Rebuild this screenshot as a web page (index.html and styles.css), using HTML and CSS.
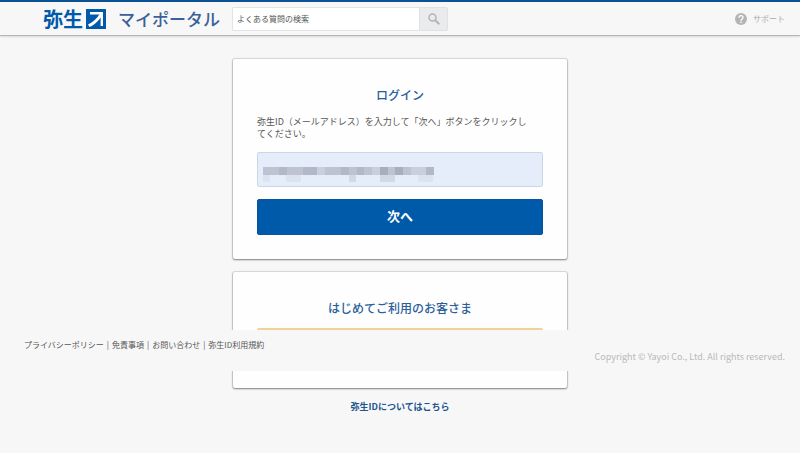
FILE: index.html
```html
<!DOCTYPE html>
<html lang="ja">
<head>
    <meta charset="UTF-8">
    <meta name="viewport" content="width=device-width, initial-scale=1.0">
    <title>弥生 マイポータル</title>
    <link rel="stylesheet" href="styles.css">
</head>
<body>
    <header class="header">
        <a class="brand" href="#">
            <span class="brand-name">弥生</span>
            <svg class="brand-mark" viewBox="0 0 20 20" aria-hidden="true">
                <path fill="#0059ab" d="M0 0h20v20H0z"/>
                <path fill="none" stroke="#fff" stroke-width="2.4" d="M4 4.2h11.8V17"/>
                <path fill="#fff" d="M2 15.5C7 13 11 9.500 14 4.500l2 2C13 12 8 16 3.500 18z"/>
            </svg>
            <span class="brand-portal">マイポータル</span>
        </a>
        <form class="search">
            <input class="search-input" type="text" placeholder="よくある質問の検索" aria-label="よくある質問の検索">
            <button class="search-btn" type="button" aria-label="検索">
                <svg width="12" height="12" viewBox="0 0 12 12" fill="none" stroke="#b4b4b4">
                    <circle cx="4.500" cy="4.500" r="3.500" stroke-width="1.500"/>
                    <path stroke-width="2" d="M7.300 7.300l4 4"/>
                </svg>
            </button>
        </form>
        <a class="support" href="#">
            <svg width="12" height="12" viewBox="0 0 12 12" aria-hidden="true">
                <circle cx="6" cy="6" r="6" fill="#b4b4b4"/>
                <path fill="none" stroke="#fff" stroke-width="1.300" d="M4 4.700C4 2 8 2 8 4.500 8 6 6 6 6 7.800"/>
                <path fill="#fff" d="M5.300 8.600h1.400V10H5.300z"/>
            </svg>
            サポート
        </a>
    </header>

    <main class="main">
        <section class="card">
            <h1 class="card-title">ログイン</h1>
            <form class="login">
                <label class="lead" for="mail">弥生ID（メールアドレス）を入力して「次へ」ボタンをクリックし<br>てください。</label>
                <div class="field">
                    <input class="field-input" type="email" id="mail">
                    <!-- masked address -->
                    <svg class="mask" width="172" height="18" viewBox="0 0 172 18" aria-hidden="true">
                        <path fill="#bdc3d1" d="M0 1h171v8H0z"/>
                        <path fill="#b2b8c7" d="M16 1h8v8h-8zM40 1h14v8H40zM78 1h8v8h-8zM94 1h7v8h-7zM163 1h8v8h-8z"/>
                        <path fill="#a8aebd" d="M117 1h8v8h-8zM132 1h8v8h-8z"/>
                        <path fill="#c9cfdc" d="M54 1h8v8h-8zM109 1h8v8h-8zM148 1h15v8h-15z"/>
                        <path fill="#dce2ef" d="M0 9h7v7H0zM23 9h15v7H23zM155 9h15v7h-15z"/>
                        <path fill="#d2d8e5" d="M86 9h7v7h-7zM117 9h15v7h-15z"/>
                    </svg>
                </div>
                <button class="btn btn-next" type="button">次へ</button>
            </form>
        </section>

        <section class="card">
            <h2 class="card-title">はじめてご利用のお客さま</h2>
            <button class="btn btn-register" type="button" aria-label="新規登録"></button>
        </section>

        <a class="about" href="#">弥生IDについてはこちら</a>
    </main>

    <footer class="footer">
        <nav class="footer-links">
            <a href="#">プライバシーポリシー</a>
            <a href="#">免責事項</a>
            <a href="#">お問い合わせ</a>
            <a href="#">弥生ID利用規約</a>
        </nav>
        <small class="copyright">Copyright © Yayoi Co., Ltd. All rights reserved.</small>
    </footer>
</body>
</html>
```
FILE: styles.css
```css
* {
    box-sizing: border-box;
}
body {
    margin: 0;
    background-color: #f7f7f7;
    color: #555;
    font-family: "Noto Sans CJK JP", sans-serif;
    font-size: 9px;
    line-height: 12px;
}
a {
    color: inherit;
    text-decoration: none;
}
button, input {
    font-family: inherit;
    margin: 0;
}
button {
    cursor: pointer;
}
.header {
    display: flex;
    align-items: center;
    height: 36px;
    padding: 0 15px 0 43px;
    border-top: 2px solid #0a5294;
    border-bottom: 1px solid #b5b5b5;
    box-shadow: 0 1px 2px rgba(0, 0, 0, 0.12);
}
.brand {
    display: flex;
    align-items: center;
    color: #0059ab;
    line-height: 24px;
}
.brand-name {
    font-size: 20px;
    font-weight: bold;
}
.brand-mark {
    width: 20px;
    height: 20px;
    margin: 0 12px 0 3px;
}
.brand-portal {
    color: #3a6199;
    font-size: 17px;
    font-weight: 500;
}
.search {
    display: flex;
    height: 24px;
    margin-left: 12px;
}
.search-input {
    width: 187px;
    padding: 0 4px;
    border: 1px solid #e2e4e6;
    border-right: none;
    border-radius: 2px 0 0 2px;
    background-color: #fff;
    font-size: 8px;
}
.search-input::placeholder {
    color: #555;
}
.search-btn {
    display: flex;
    align-items: center;
    justify-content: center;
    width: 29px;
    padding: 0;
    border: 1px solid #dfe1e3;
    border-radius: 0 2px 2px 0;
    background-color: #e9ebed;
}
.support {
    display: flex;
    align-items: center;
    gap: 6px;
    margin-left: auto;
    color: #aaa;
    font-size: 8px;
}
.main {
    display: flex;
    flex-direction: column;
    align-items: center;
    gap: 13px;
    padding: 23px 24px;
}
.card {
    width: 100%;
    max-width: 334px;
    padding: 24px;
    border-radius: 2px;
    background-color: #fefefe;
    box-shadow: 0 0 1px 1px rgba(0, 0, 0, 0.13), 0 1px 2px rgba(0, 0, 0, 0.4);
}
.card-title {
    margin: 0 0 8px;
    color: #29609a;
    font-size: 12px;
    font-weight: 500;
    line-height: 24px;
    text-align: center;
}
.login {
    display: flex;
    flex-direction: column;
    gap: 12px;
}
.lead {
    padding-top: 1px;
}
.field {
    position: relative;
    display: flex;
}
.field-input {
    width: 100%;
    height: 35px;
    padding: 0 6px;
    border: 1px solid #ccd7e6;
    border-radius: 2px;
    background-color: #e5edfa;
    font-size: 9px;
}
.mask {
    position: absolute;
    top: 14px;
    left: 6px;
    pointer-events: none;
}
.btn {
    display: block;
    width: 100%;
    height: 36px;
    padding: 0 0 3px;
    border-radius: 2px;
    font-size: 13px;
    font-weight: bold;
}
.btn-next {
    border: 1px solid #0753a0;
    background-color: #005aaa;
    color: #fff;
}
.btn-register {
    border: 2px solid #eed394;
    background-color: #f9b42d;
}
.about {
    color: #1c5590;
    font-weight: bold;
}
.footer {
    position: absolute;
    top: 330px;
    left: 0;
    display: flex;
    flex-direction: column;
    width: 100%;
    padding: 8px 15px 8px 24px;
    background-color: #f7f7f7;
}
.footer-links {
    display: flex;
    color: #555;
    font-size: 8px;
    line-height: 13px;
}
.footer-links a + a::before {
    content: "|";
    margin: 0 3px;
}
.copyright {
    align-self: flex-end;
    color: #b9b9b9;
    font-size: 9px;
}
```
